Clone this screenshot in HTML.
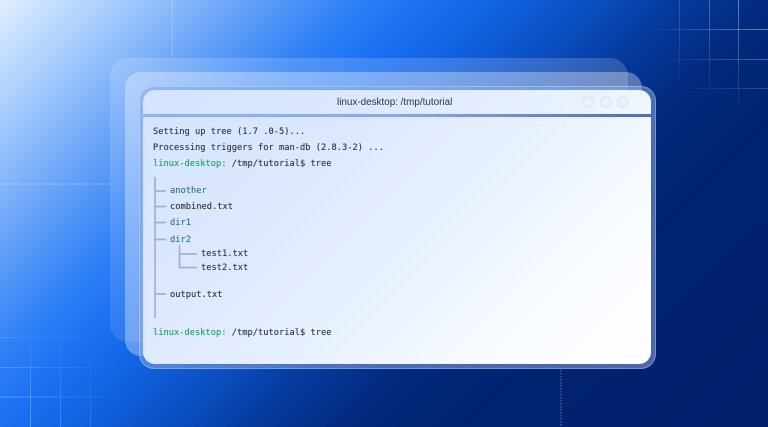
<!DOCTYPE html>
<html><head><meta charset="utf-8"><style>
html,body{margin:0;padding:0;width:768px;height:427px;overflow:hidden}
#bg{position:absolute;left:0;top:0;width:768px;height:427px;overflow:hidden;background:linear-gradient(135deg,#e2efff 0%,#a6ccfc 10%,#6aa5f8 20%,#2f80f5 30%,#1a70f2 36%,#1060dd 43%,#0a4ec0 50%,#053a9c 57%,#02297c 65%,#01226f 75%,#01206c 100%)}
.abs{position:absolute;box-sizing:border-box}
.t{position:absolute;font:8.72px/12px "DejaVu Sans Mono","Liberation Mono",monospace;color:#2f343d;white-space:pre;filter:blur(.3px);text-shadow:0 0 .5px rgba(42,47,56,.5)}
.g{color:#1fa25a;text-shadow:0 0 .5px rgba(23,160,85,.5)}.b{color:#1f74b5;text-shadow:0 0 .5px rgba(26,112,176,.5)}
.c{position:absolute;top:96px;width:12px;height:12px;border-radius:50%;background:radial-gradient(circle,#f0f5ff 0%,#e8f0fe 45%,#d3e1fa 75%,#dfe9fb 100%);filter:blur(.3px)}
</style></head><body><div id="bg">
<svg class="abs" style="left:0;top:0" width="768" height="427">
<defs>
<linearGradient id="fl" x1="0" y1="0" x2="1" y2="0"><stop offset="0" stop-color="#fff" stop-opacity=".28"/><stop offset="1" stop-color="#fff" stop-opacity="0"/></linearGradient>
<linearGradient id="fu" x1="0" y1="1" x2="0" y2="0"><stop offset="0" stop-color="#fff" stop-opacity=".3"/><stop offset="1" stop-color="#fff" stop-opacity="0"/></linearGradient>
<linearGradient id="fr" x1="1" y1="0" x2="0" y2="0"><stop offset="0" stop-color="#fff" stop-opacity=".4"/><stop offset="1" stop-color="#fff" stop-opacity="0"/></linearGradient>
<linearGradient id="fd" x1="0" y1="0" x2="0" y2="1"><stop offset="0" stop-color="#fff" stop-opacity=".4"/><stop offset="1" stop-color="#fff" stop-opacity="0"/></linearGradient>
</defs>
<rect x="0" y="337" width="110" height="1" fill="url(#fl)" opacity=".4"/>
<rect x="0" y="367" width="120" height="1" fill="url(#fl)" opacity=".7"/>
<rect x="0" y="396.500" width="130" height="1" fill="url(#fl)"/>
<rect x="30" y="320" width="1" height="107" fill="url(#fu)"/>
<rect x="60" y="330" width="1" height="97" fill="url(#fu)" opacity=".7"/>
<rect x="90" y="340" width="1" height="87" fill="url(#fu)" opacity=".4"/>
<rect x="645" y="29" width="123" height="1" fill="url(#fr)"/>
<rect x="660" y="59" width="108" height="1" fill="url(#fr)" opacity=".7"/>
<rect x="680" y="88" width="88" height="1" fill="url(#fr)" opacity=".45"/>
<rect x="738" y="0" width="1" height="115" fill="url(#fd)"/>
<rect x="709" y="0" width="1" height="105" fill="url(#fd)" opacity=".7"/>
<rect x="679" y="0" width="1" height="95" fill="url(#fd)" opacity=".45"/>
<path d="M172 0V58" stroke="#fff" stroke-opacity=".45" stroke-dasharray="1.500 1.500"/>
<path d="M0 184H110" stroke="#fff" stroke-opacity=".45" stroke-dasharray="1.500 1.500"/>
<path d="M561 370V427" stroke="#fff" stroke-opacity=".4" stroke-dasharray="1.500 1.500"/>
</svg>
<div class="abs" style="left:110px;top:58px;width:518px;height:284px;border-radius:18px;background:linear-gradient(180deg,rgba(255,255,255,.17),rgba(255,255,255,.1))"></div>
<div class="abs" style="left:125px;top:72px;width:517px;height:284px;border-radius:16px;background:rgba(255,255,255,.33)"></div>
<div class="abs" style="left:138.500px;top:85.500px;width:517.500px;height:283.500px;border-radius:15px;background:rgba(125,165,235,.55);border:1px solid rgba(255,255,255,.28)"></div>
<div class="abs" style="left:143px;top:90px;width:508px;height:274px;border-radius:12px;overflow:hidden;background:linear-gradient(135deg,#d4e4ff 0%,#dce8ff 30%,#e8f1ff 55%,#f6faff 75%,#ffffff 100%)">
 <div class="abs" style="left:0;top:24px;width:508px;height:3px;background:linear-gradient(90deg,#8db5f4,#86aaea 50%,#4a6fb5 100%)"></div>
</div>
<div class="c" style="left:582px"></div>
<div class="c" style="left:600px"></div>
<div class="c" style="left:617px"></div>
<div class="t" style="left:337px;top:96px;font:9.9px/13px 'Liberation Sans',sans-serif;color:#2e3540;text-shadow:none">linux-desktop: /tmp/tutorial</div>
<div class="t" style="left:153px;top:126px">Setting up tree (1.7 .0-5)...</div>
<div class="t" style="left:153px;top:142px">Processing triggers for man-db (2.8.3-2) ...</div>
<div class="t" style="left:153px;top:158px"><span class="g">linux-desktop:</span> /tmp/tutorial$ tree</div>
<div class="t b" style="left:170px;top:185px">another</div>
<div class="t" style="left:170px;top:201px">combined.txt</div>
<div class="t b" style="left:170px;top:217px">dir1</div>
<div class="t b" style="left:170px;top:234px">dir2</div>
<div class="t" style="left:201px;top:248px">test1.txt</div>
<div class="t" style="left:201px;top:262px">test2.txt</div>
<div class="t" style="left:170px;top:289px">output.txt</div>
<div class="t" style="left:153px;top:327px"><span class="g">linux-desktop:</span> /tmp/tutorial$ tree</div>
<svg class="abs" style="left:0;top:0" width="768" height="427" fill="none" stroke="#a3b1cb" stroke-width="1.700">
<path d="M155 177V318"/>
<path d="M155 191H166M155 206.500H166M155 222.500H166M155 239.500H166M155 294H166"/>
<path d="M179.500 245V267.500H197M179.500 254H197"/>
</svg>
</div></body></html>
